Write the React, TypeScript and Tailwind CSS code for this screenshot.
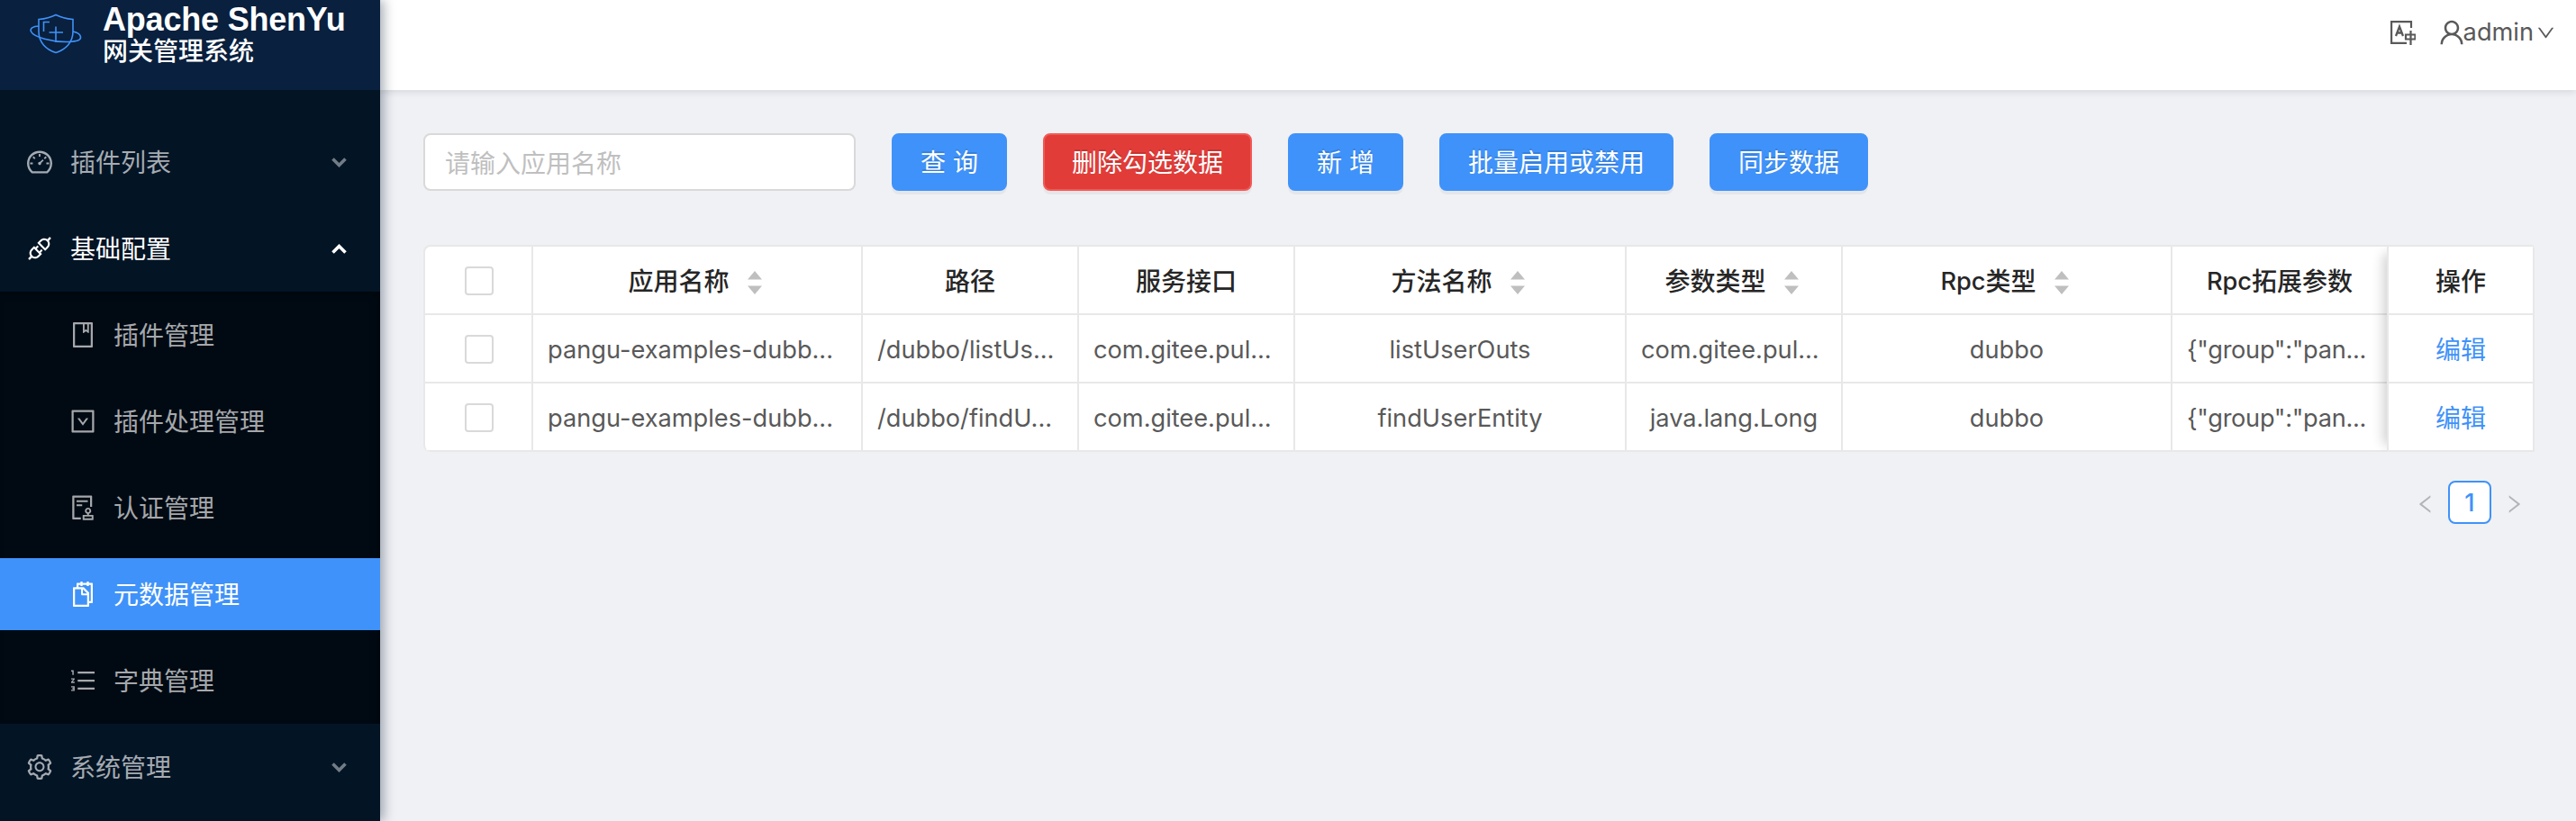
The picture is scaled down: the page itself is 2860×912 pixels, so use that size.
import React from "react";
import {
  AiOutlineDashboard, AiOutlineApi, AiOutlineBook, AiOutlineDownSquare, AiOutlineAudit,
  AiOutlineSnippets, AiOutlineOrderedList, AiOutlineSetting, AiOutlineUser, AiOutlineDown,
  AiOutlineLeft, AiOutlineRight,
} from "react-icons/ai";

const subItems = [
  { label: "插件管理", Icon: AiOutlineBook },
  { label: "插件处理管理", Icon: AiOutlineDownSquare },
  { label: "认证管理", Icon: AiOutlineAudit },
  { label: "元数据管理", Icon: AiOutlineSnippets, active: true },
  { label: "字典管理", Icon: AiOutlineOrderedList },
];

const columns = [
  { title: "应用名称", sort: true },
  { title: "路径" },
  { title: "服务接口" },
  { title: "方法名称", sort: true },
  { title: "参数类型", sort: true },
  { prefix: "Rpc", title: "类型", sort: true },
  { prefix: "Rpc", title: "拓展参数" },
];

const rows = [
  ["pangu-examples-dubb...", "/dubbo/listUs...", "com.gitee.pul...", "listUserOuts", "com.gitee.pul...", "dubbo", '{"group":"pan...'],
  ["pangu-examples-dubb...", "/dubbo/findU...", "com.gitee.pul...", "findUserEntity", "java.lang.Long", "dubbo", '{"group":"pan...'],
];

const gridCols = "grid h-[76px] grid-cols-[120px_366px_240px_240px_368px_240px_366px_240px]";

function Logo() {
  return (
    <svg className="h-[46px] w-[58px] shrink-0" viewBox="0 0 58 46" fill="none" stroke="#3f92f9" strokeWidth="1.6">
      <path d="M10 6.500Q21 5.500 29 1.500Q37 5.500 48 6.500V20C48 32 40 40 29 43.500C18 40 10 32 10 20Z" />
      <path d="M10 14C3 14 0 17 1.500 20C4 26 25 32 43 31.500C52 31 57 30 56.500 26C56 23 53 21 48 20" />
      <path d="M15.500 20V9.500H22M29 14.500V32M21.500 21H37" />
    </svg>
  );
}

function Arrow({ up }: { up?: boolean }) {
  return (
    <svg className="h-[11px] w-[17px]" viewBox="0 0 17 11" fill="none" stroke="currentColor" strokeWidth="3.600">
      <path d={up ? "M1.500 9.500L8.500 2.500L15.500 9.500" : "M1.500 1.500L8.500 8.500L15.500 1.500"} />
    </svg>
  );
}

function Sorter() {
  return (
    <svg className="mt-[2px] mr-[5px] ml-5 h-[26px] w-4" viewBox="0 0 16 26" fill="#bfbfbf">
      <path d="M8 0L16 9.500H0ZM8 26L16 16.500H0Z" />
    </svg>
  );
}

function LangIcon() {
  return (
    <svg className="h-[28px] w-[30px]" viewBox="0 0 30 28" fill="none" stroke="currentColor" strokeWidth="2.200">
      <path d="M25 9V2.100H3.100V25.900H20" />
      <path d="M8 18L12 7.500L16 18M9.500 14.500H14.500" strokeWidth="2.300" />
      <path d="M24.500 12V28M19 16.500H29.500V21.500H19Z" strokeWidth="2.200" />
    </svg>
  );
}

function Cell({ children, head, left }: { children?: React.ReactNode; head?: boolean; left?: boolean }) {
  return (
    <div
      className={
        "flex items-center border-r-2 border-b-2 border-[#e8e8e8] pt-1 whitespace-nowrap " +
        (left ? "pl-4 " : "justify-center ") +
        (head ? "font-medium text-[#262626]" : "text-[#595959]")
      }
    >
      {children}
    </div>
  );
}

function Check() {
  return <div className="mb-0.5 ml-0.5 size-8 rounded-[4px] border-2 border-[#d9d9d9] bg-white" />;
}

function Button({ children, className }: { children: React.ReactNode; className: string }) {
  return (
    <button className={"h-16 rounded-lg border-2 pt-0.5 text-[28px] leading-[58px] text-white shadow-[0_4px_0_rgba(0,0,0,0.045)] [text-shadow:0_-2px_0_rgba(0,0,0,0.12)] " + className}>
      {children}
    </button>
  );
}

export default function App() {
  return (
    <div className="flex h-[912px] w-[2860px] overflow-hidden bg-[#f0f1f5] font-['Inter','Noto_Sans_CJK_SC',sans-serif] text-[28px] leading-[42px]">
      <aside className="z-10 flex w-[422px] shrink-0 flex-col bg-[#031425] shadow-[4px_0_12px_rgba(0,21,41,0.35)]">
        <div className="flex h-[100px] shrink-0 gap-[22px] bg-[#09203e] pl-[33px] text-white">
          <div className="pt-[15px]"><Logo /></div>
          <div className="pt-[2px]">
            <div className="pl-px font-['Liberation_Sans',sans-serif] text-[36px] leading-[40px] font-bold tracking-[-0.2px] whitespace-nowrap">Apache ShenYu</div>
            <div className="pl-px text-[28px] leading-[30px] font-medium">网关管理系统</div>
          </div>
        </div>
        <div className="mt-10 flex h-20 shrink-0 items-center pr-[37px] pl-7 text-[#a5abb1]">
          <AiOutlineDashboard className="size-8" />
          <span className="ml-[18px] flex-1 pt-0.5">插件列表</span>
          <span className="text-[#737c85]"><Arrow /></span>
        </div>
        <div className="mt-4 flex h-20 shrink-0 items-center pr-[37px] pl-7 text-white">
          <AiOutlineApi className="size-8" />
          <span className="ml-[18px] flex-1 pt-0.5">基础配置</span>
          <Arrow up />
        </div>
        <div className="mt-2 flex h-[480px] shrink-0 flex-col gap-4 bg-[#010a13] pt-2 shadow-[inset_-4px_4px_8px_-2px_rgba(0,0,0,0.4)]">
          {subItems.map(({ label, Icon, active }) => (
            <div key={label} className={"flex h-20 shrink-0 items-center pl-[76px] " + (active ? "bg-[#3f92f9] text-white" : "text-[#a5a8ab]")}>
              <Icon className="size-8" />
              <span className="ml-[18px] pt-0.5">{label}</span>
            </div>
          ))}
        </div>
        <div className="mt-2 flex h-20 shrink-0 items-center pr-[37px] pl-7 text-[#a5abb1]">
          <AiOutlineSetting className="size-8" />
          <span className="ml-[18px] flex-1 pt-0.5">系统管理</span>
          <span className="text-[#737c85]"><Arrow /></span>
        </div>
      </aside>

      <div className="flex min-w-0 flex-1 flex-col">
        <header className="flex h-[100px] shrink-0 items-start justify-end bg-white pr-[22px] text-[#595959] shadow-[0_2px_8px_rgba(0,21,41,0.12)]">
          <div className="mt-[22px] mr-[23px]"><LangIcon /></div>
          <div className="mt-[15px] flex items-center">
            <AiOutlineUser className="-mr-[4px] size-[34px]" />
            <span className="text-[27.2px]">admin</span>
            <AiOutlineDown className="ml-[2px] size-[23px]" />
          </div>
        </header>

        <main className="px-12 pt-12">
          <div className="flex gap-10">
            <input className="h-16 w-[480px] rounded-lg border-2 border-[#d9d9d9] bg-white px-[22px] pt-1 text-[28px] outline-none placeholder:text-[#bfbfbf]" placeholder="请输入应用名称" />
            <Button className="w-32 border-[#3f92f9] bg-[#3f92f9]">查 询</Button>
            <Button className="w-[232px] border-[#f05a56] bg-[#e23c39]">删除勾选数据</Button>
            <Button className="w-32 border-[#3f92f9] bg-[#3f92f9]">新 增</Button>
            <Button className="w-[260px] border-[#3f92f9] bg-[#3f92f9]">批量启用或禁用</Button>
            <Button className="w-44 border-[#3f92f9] bg-[#3f92f9]">同步数据</Button>
          </div>

          <div className="mt-[60px] flex h-[230px] w-[2344px] overflow-hidden rounded-l-lg rounded-tr-[4px] border-t-2 border-l-2 border-[#e8e8e8] bg-white">
            <div className="shrink-0">
              <div className={gridCols}>
                <Cell head><Check /></Cell>
                {columns.map((c, i) => (
                  <Cell key={i} head>
                    {c.prefix && <span className="text-[27.2px]">{c.prefix}</span>}
                    {c.title}
                    {c.sort && <Sorter />}
                  </Cell>
                ))}
              </div>
              {rows.map((r, i) => (
                <div key={i} className={gridCols}>
                  <Cell><Check /></Cell>
                  {r.map((t, j) => (
                    <Cell key={j} left={t.endsWith("...")}>
                      <span className={t.startsWith("{") ? "text-[27.2px] tracking-[-0.3px]" : "text-[27.2px]"}>{t}</span>
                    </Cell>
                  ))}
                </div>
              ))}
            </div>
            <div className="z-10 -ml-0.5 grid w-[164px] shrink-0 grid-rows-[76px_76px_76px] border-l-2 border-[#e8e8e8] bg-white shadow-[-12px_0_12px_-8px_rgba(0,0,0,0.18)]">
              <Cell head>操作</Cell>
              {rows.map((_, i) => (
                <Cell key={i}><span className="text-[#3f92f9]">编辑</span></Cell>
              ))}
            </div>
          </div>

          <div className="mt-8 flex h-12 items-center justify-end pr-2 text-[#b4b4b8]">
            <AiOutlineLeft className="mt-1 mr-3 size-[26px]" />
            <div className="flex h-12 w-12 items-center justify-center rounded-lg border-2 border-[#3f92f9] bg-white pt-0.5 text-[27.2px] font-medium text-[#3f92f9]">1</div>
            <AiOutlineRight className="mt-1 ml-3 size-[26px]" />
          </div>
        </main>
      </div>
    </div>
  );
}
